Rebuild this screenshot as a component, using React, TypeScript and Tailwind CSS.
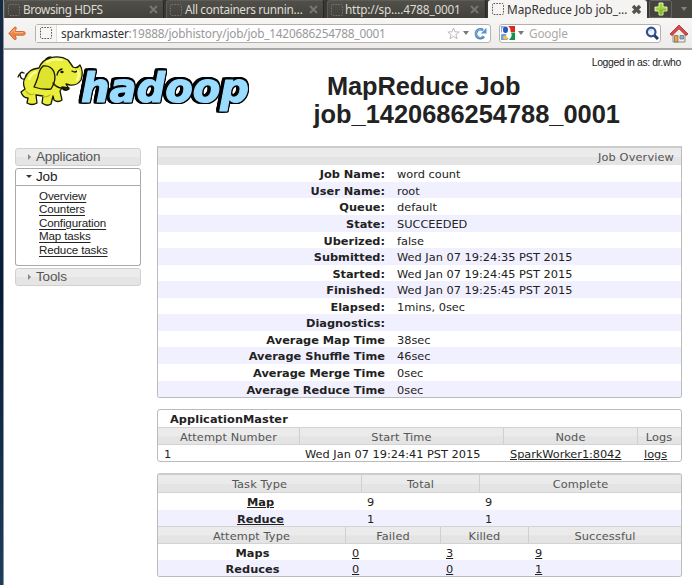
import type { ReactNode } from 'react';

const details: [string, string][] = [
  ['Job Name:', 'word count'],
  ['User Name:', 'root'],
  ['Queue:', 'default'],
  ['State:', 'SUCCEEDED'],
  ['Uberized:', 'false'],
  ['Submitted:', 'Wed Jan 07 19:24:35 PST 2015'],
  ['Started:', 'Wed Jan 07 19:24:45 PST 2015'],
  ['Finished:', 'Wed Jan 07 19:25:45 PST 2015'],
  ['Elapsed:', '1mins, 0sec'],
  ['Diagnostics:', ''],
  ['Average Map Time', '38sec'],
  ['Average Shuffle Time', '46sec'],
  ['Average Merge Time', '0sec'],
  ['Average Reduce Time', '0sec'],
];

const links = ['Overview', 'Counters', 'Configuration', 'Map tasks', 'Reduce tasks'];

function Favicon({ className }: { className: string }) {
  return (
    <svg className={`h-[12px] w-[12px] shrink-0 ${className}`} viewBox="0 0 12 12" fill="none">
      <rect x="0.5" y="0.5" width="11" height="11" rx="1" stroke="currentColor" strokeDasharray="1.6 1.2" />
    </svg>
  );
}

function Close({ active = false }: { active?: boolean }) {
  return active ? (
    <svg className="h-[11px] w-[11px] shrink-0" viewBox="0 0 11 11">
      <path d="M2 2 9 9M9 2 2 9" stroke="#55534e" strokeWidth="3.4" />
    </svg>
  ) : (
    <svg className="h-[9px] w-[9px] shrink-0" viewBox="0 0 9 9">
      <path d="M1 1 8 8M8 1 1 8" stroke="#77756f" strokeWidth="2" />
    </svg>
  );
}

function Tab({ title, className, label }: { title: string; className: string; label: string }) {
  return (
    <div className={`flex h-[18px] shrink-0 items-center rounded-t-[3px] border-t border-r border-l border-[#5e5c56] border-r-[#282724] bg-linear-to-b from-[#504f4a] to-[#42413c] pl-[3px] ${className}`}>
      <Favicon className="text-[#77756f]" />
      <span className={`flex-1 whitespace-nowrap text-[#dfdbd2] ${label}`}>{title}</span>
      <Close />
    </div>
  );
}

function Caret({ className = '' }: { className?: string }) {
  return (
    <svg className={`h-[4px] w-[6px] shrink-0 ${className}`} viewBox="0 0 6 4">
      <path d="M0 0H6L3 4Z" fill="currentColor" />
    </svg>
  );
}

function Browser() {
  return (
    <header className="font-['Noto_Sans',sans-serif]">
      <div className="flex h-[18px] items-start overflow-hidden bg-[#393834] text-[11.8px] leading-[17px]">
        <Tab title="Browsing HDFS" label="ml-[3px] tracking-[-0.4px]" className="w-[160px] pr-[5px]" />
        <Tab title="All containers runnin…" label="ml-[3px] tracking-[-0.33px]" className="ml-[2px] w-[158px] pr-[5px]" />
        <Tab title="http://sp….4788_0001" label="ml-[2px] tracking-[-0.2px]" className="ml-[3px] w-[159px] pr-[6px]" />
        <div className="ml-[2px] flex h-[18px] w-[159px] shrink-0 items-center rounded-t-[3px] bg-[#f5f4f2] pr-[5px] pl-[4px]">
          <Favicon className="text-[#55534e]" />
          <span className="ml-[3px] flex-1 whitespace-nowrap tracking-[-0.05px] text-[#333]">MapReduce Job job_…</span>
          <Close active />
        </div>
        <div className="ml-[2px] flex h-[18px] w-[23px] shrink-0 items-center justify-center rounded-t-[2px] border border-[#66645e] bg-[#44433e]">
          <svg className="h-[14px] w-[14px]" viewBox="0 0 14 14">
            <path d="M5 1H9V5H13V9H9V13H5V9H1V5H5Z" fill="#a2d335" stroke="#e2f1c2" strokeWidth="1" />
            <path d="M5.5 7.5H12.5V8.5H8.5V12.5H5.5Z" fill="#7fbd20" />
          </svg>
        </div>
        <div className="flex h-[18px] flex-1 items-center justify-center bg-[#464540] pr-[2px] pl-[5px] text-[#85827b]">
          <Caret />
        </div>
      </div>
      <div className="flex h-[30px] items-center bg-linear-to-b from-[#f7f6f5] to-[#eeecea]">
        <svg className="ml-[4px] h-[15px] w-[18px] shrink-0" viewBox="0 0 18 15">
          <path d="M6.500 1.200Q8.300.5 8.300 2.300L7 5.500H15.500Q17.200 5.600 17.200 7.300T15.500 9.200H7L8.300 12.300Q8.200 14.300 6.300 13.500L.8 7.400Z" fill="#ee8446" stroke="#c8642b" strokeWidth=".9" />
          <path d="M2.800 7 6.700 3V6.700H15" fill="none" stroke="#fbb98c" />
        </svg>
        <div className="ml-[9px] flex h-[19px] w-[456px] shrink-0 items-center rounded-[3px] border border-[#b5b1ac] bg-white">
          <div className="flex h-full w-[21px] items-center justify-center border-r border-[#ddd] bg-[#f7f6f5]">
            <Favicon className="text-[#55534e]" />
          </div>
          <span className="ml-[4px] flex-1 whitespace-nowrap text-[11.8px] leading-[17px] tracking-[-0.2px] text-[#999]"><span className="text-[#333]">sparkmaster</span>:19888/jobhistory/job/job_1420686254788_0001</span>
          <svg className="h-[13px] w-[13px]" viewBox="0 0 13 13">
            <path d="m6.500 1 1.500 3.800 4.200.2-3.300 2.700 1.200 4.100-3.600-2.400-3.600 2.400 1.200-4.100L.8 5 5 4.800Z" fill="#fff" stroke="#bbb" />
          </svg>
          <Caret className="ml-[3px] text-[#777]" />
          <svg className="mr-[3px] ml-[5px] h-[13px] w-[13px]" viewBox="0 0 13 13">
            <path d="M9.900 9.400A4.400 4.400 0 1 1 9 3.200" fill="none" stroke="#4c85bd" strokeWidth="2.800" />
            <path d="M12.500.8V6.500H6.800Z" fill="#5b96cd" />
            <path d="M9 9.100A4 4 0 1 1 8 3.100" fill="none" stroke="#9dc3e6" strokeWidth=".8" />
          </svg>
        </div>
        <div className="ml-[8px] flex h-[19px] w-[162px] shrink-0 items-center rounded-[3px] border border-[#b5b1ac] bg-white">
          <svg className="ml-[1px] h-[14px] w-[14px]" viewBox="0 0 14 14">
            <path d="M0 0H5Q0 1 1 6L0 7Z" fill="#88a7ec" />
            <path d="M7 0H14V6H9.500Q10 2 7 0Z" fill="#dc2a20" />
            <path d="M10 6.500H14V14H8Q12 10 10 6.500Z" fill="#159348" />
            <path d="M0 8.500Q3 7 6 9L8 12 6 14H0Z" fill="#6c9deb" />
            <ellipse cx="4.500" cy="3.800" rx="2.500" ry="3.200" fill="#2757bd" />
            <ellipse cx="4.500" cy="11.500" rx="2.500" ry="1.900" fill="#f6c334" />
            <path d="M7.500 4Q9.500 6 7 8T8.500 12" fill="none" stroke="#fff" strokeWidth="1.500" />
          </svg>
          <Caret className="ml-[3px] text-[#777]" />
          <span className="ml-[5px] flex-1 text-[11.8px] leading-[17px] tracking-[-0.2px] text-[#aaa]">Google</span>
          <svg className="mr-[1px] h-[14px] w-[14px]" viewBox="0 0 14 14">
            <path d="m9 9 4 4" stroke="#233869" strokeWidth="3" />
            <circle cx="6.200" cy="6" r="4.300" fill="#eef4fb" stroke="#344f90" strokeWidth="2.200" />
            <path d="M4 5.500Q5 3.500 7 4" fill="none" stroke="#a3bce2" />
          </svg>
        </div>
        <svg className="ml-[9px] h-[19px] w-[18px] shrink-0" viewBox="0 0 18 19">
          <path d="M3 9 9 3 15 9V18H3Z" fill="#f0eee9" stroke="#8c8a85" />
          <path d="M0 10 9 1 18 10 16 11.500 9 4.800 2 11.500Z" fill="#d74a4a" stroke="#a62c2c" strokeWidth=".8" />
          <path d="M4.500 11.500H8V18H4.500Z" fill="#dda35b" stroke="#8a6437" strokeWidth=".7" />
          <path d="M10 11.500H13.500V15H10Z" fill="#8ab1dd" stroke="#666" strokeWidth=".7" />
        </svg>
      </div>
      <div className="h-[2px] bg-[#aaa8a5]" />
    </header>
  );
}

function Logo() {
  return (
    <svg className="h-[62px] w-[240px]" viewBox="16 52 240 62" role="img" aria-label="hadoop">
      <text
        className="[filter:drop-shadow(1.5px_0_0_#000)_drop-shadow(-2.5px_0_0_#000)_drop-shadow(0_1.5px_0_#000)_drop-shadow(0_-1.5px_0_#000)]"
        x="81" y="102" textLength="168" lengthAdjust="spacingAndGlyphs"
        fontFamily="'DejaVu Sans', sans-serif" fontWeight="700" fontStyle="italic" fontSize="41"
        fill="#99dcff" stroke="#99dcff" strokeWidth="1.200" strokeLinejoin="round"
      >hadoop</text>
      <g stroke="#181800" strokeWidth="1.300" strokeLinejoin="round" strokeLinecap="round">
        <path d="M25 79Q21 80 20 75Q20 71 24 73M22 72Q19 74 18 77M46 59Q48 57 51 57" fill="none" />
        <path d="M25 78Q28 69 39 68Q42 60 50 58Q60 55 68 60L73 67Q77 69 80 65Q84 72 81 80Q77 86 70 85L66 84 69 89Q65 92 62 88L60 91 62 100Q58 103 54 100L53 96 51 104Q47 107 42 103L43 96 36 95 37 103Q32 106 27 103L28 98Q23 98 21 92L25 89Q22 83 25 78Z" fill="#e9ee3c" />
        <path d="M43 66Q39 70 38 77Q36 83 34 87Q43 90 51 89Q57 80 54 72Q51 65 43 66Z" fill="#dee32f" />
        <path d="M53 83Q57 88 62 88M72 71Q75 73 77 71M57 75Q58 70 62 69" fill="none" />
        <path d="M47 62Q53 58 62 60M29 79Q31 74 36 72M78 71Q80 75 77 80" fill="none" stroke="#fbff9c" strokeWidth="2.200" />
        <path d="M26 91Q29 96 34 94M43 96Q46 98 50 95" fill="none" stroke="#b4b823" />
        <ellipse cx="62" cy="72" rx="1.700" ry="1.300" fill="#181800" stroke="none" />
        <path d="M62 87 69 88Q66 92 62 87Z" fill="#333" />
      </g>
    </svg>
  );
}

function Section({ title, open = false }: { title: string; open?: boolean }) {
  return (
    <div className={`flex items-center border text-[13.5px] tracking-[-0.16px] ${open ? 'h-[18px] rounded-t-[3px] border-[#aaa] bg-white text-[#212121]' : 'h-[18px] rounded-[3px] border-[#d0d0d0] bg-linear-to-b from-[#ececec] from-50% to-[#e5e5e5] to-50% text-[#555]'}`}>
      <svg className="mr-[4px] ml-[10px] h-[6px] w-[6px]" viewBox="0 0 6 6">
        {open ? <path d="M0 1H6L3 4Z" fill="#333" /> : <path d="M2 0 5 3 2 6Z" fill="#888" />}
      </svg>
      {title}
    </div>
  );
}

function Head({ className, children }: { className: string; children: ReactNode }) {
  return <div className={`shrink-0 border-r border-[#d0d0d0] text-center last:border-r-0 ${className}`}>{children}</div>;
}

const headRow = 'flex border-b border-[#d3d3d3] bg-linear-to-b from-[#ebebeb] from-50% to-[#e4e4e4] to-55% tracking-[0.12px] text-[#555]';

export default function App() {
  return (
    <div className="flex h-[585px] w-[692px] overflow-hidden bg-white font-['DejaVu_Sans',sans-serif] text-[11.35px] text-[#222]">
      <div className="w-[4px] shrink-0 border-r border-[#8995a3] bg-linear-to-b from-[#192a43] via-[#071d36] to-[#203c5c]" />
      <div className="w-[688px] shrink-0">
        <Browser />
        <div className="flex h-[98px] font-['Liberation_Sans',Arial,sans-serif]">
          <div className="w-[297px] shrink-0 pt-[2px] pl-[12px]"><Logo /></div>
          <div className="flex-1">
            <div className="h-[22px] pt-[6px] pr-[11px] text-right text-[10.4px] leading-[13px] tracking-[-0.33px]">Logged in as: dr.who</div>
            <h1 className="pl-[12.500px] text-[25.4px] leading-[28px] font-bold"><span className="ml-[13.500px] tracking-[-0.1px]">MapReduce Job</span><br />job_1420686254788_0001</h1>
          </div>
        </div>
        <div className="flex">
          <aside className="w-[153px] shrink-0 pr-[16px] pl-[11px] font-['Liberation_Sans',Arial,sans-serif]">
            <Section title="Application" />
            <div className="my-[2px] h-[98px]">
              <Section title="Job" open />
              <ul className="h-[80px] rounded-b-[3px] border border-t-0 border-[#aaa] pt-[2.500px] pl-[23px] text-[11.6px] leading-[13.5px] tracking-[-0.14px]">
                {links.map((link) => (
                  <li key={link}><a className="underline underline-offset-[1.500px]">{link}</a></li>
                ))}
              </ul>
            </div>
            <Section title="Tools" />
          </aside>
          <main className="-mt-[2px] w-[525px] shrink-0">
            <section className="h-[252px] overflow-hidden rounded-b-[3px] border border-t-2 border-[#bbb] border-t-[#ccc]">
              <div className={`${headRow} h-[17.400px] justify-end border-b-0 pr-[7px] leading-[19px]`}>Job Overview</div>
              {details.map(([name, value]) => (
                <div key={name} className="flex h-[16.550px] leading-[19px] even:bg-white odd:bg-[#f1f0ff]">
                  <div className="w-[227px] shrink-0 text-right font-bold">{name}</div>
                  <div className="pl-[12px]">{value}</div>
                </div>
              ))}
            </section>
            <section className="mt-[11px] h-[53px] overflow-hidden rounded-[3px] border border-[#bbb]">
              <div className="h-[17px] pl-[12px] leading-[19px] font-bold tracking-[0.06px]">ApplicationMaster</div>
              <div className={`${headRow} h-[18px] border-t leading-[18px]`}>
                <Head className="w-[142px]">Attempt Number</Head>
                <Head className="w-[204px]">Start Time</Head>
                <Head className="w-[134px]">Node</Head>
                <Head className="w-[42px]">Logs</Head>
              </div>
              <div className="flex h-[16px] leading-[18px]">
                <div className="w-[147px] pl-[6px]">1</div>
                <div className="w-[205px]">Wed Jan 07 19:24:41 PST 2015</div>
                <div className="w-[134px] tracking-[-0.06px] underline">SparkWorker1:8042</div>
                <div className="underline">logs</div>
              </div>
            </section>
            <section className="mt-[11px] h-[104px] overflow-hidden rounded-[3px] border border-t-2 border-[#bbb] border-t-[#ccc]">
              <div className={`${headRow} h-[18px] leading-[19px]`}>
                <Head className="w-[204px]">Task Type</Head>
                <Head className="w-[118px]">Total</Head>
                <Head className="w-[201px]">Complete</Head>
              </div>
              {[['Map', '9'], ['Reduce', '1']].map(([name, count]) => (
                <div key={name} className="flex h-[16.500px] leading-[18px] odd:bg-[#f1f0ff]">
                  <div className="w-[209px] pr-[4px] text-center font-bold underline">{name}</div>
                  <div className="w-[118px]">{count}</div>
                  <div>{count}</div>
                </div>
              ))}
              <div className={`${headRow} h-[18px] border-t leading-[18px]`}>
                <Head className="w-[188px]">Attempt Type</Head>
                <Head className="w-[95px]">Failed</Head>
                <Head className="w-[88px]">Killed</Head>
                <Head className="w-[152px]">Successful</Head>
              </div>
              {[['Maps', '0', '3', '9'], ['Reduces', '0', '0', '1']].map(([name, failed, killed, successful]) => (
                <div key={name} className="flex h-[16px] leading-[18px] even:bg-[#f1f0ff]">
                  <div className="w-[194px] pr-[5px] text-center font-bold">{name}</div>
                  <div className="w-[94px]"><a className="underline">{failed}</a></div>
                  <div className="w-[89px]"><a className="underline">{killed}</a></div>
                  <div><a className="underline">{successful}</a></div>
                </div>
              ))}
            </section>
          </main>
        </div>
      </div>
    </div>
  );
}
